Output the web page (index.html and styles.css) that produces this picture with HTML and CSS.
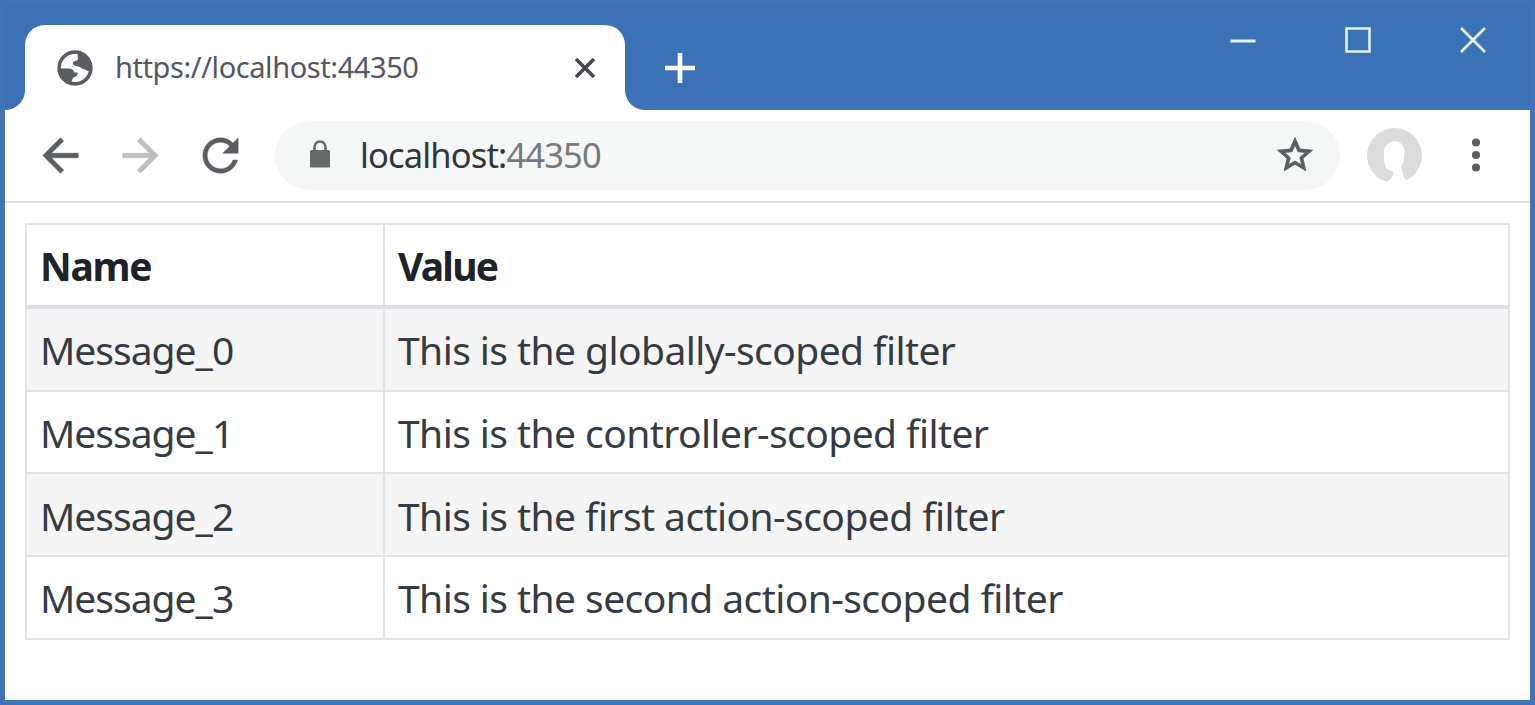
FILE: index.html
```html
<!DOCTYPE html>
<html lang="en">
<head>
<meta charset="utf-8">
<title>https://localhost:44350</title>
<link rel="stylesheet" href="styles.css">
</head>
<body>
<div class="window">
  <header class="titlebar">
    <div class="tab">
      <svg class="globe" viewBox="0 0 36 36"><circle cx="18" cy="18" r="15.900" fill="#fff" stroke="#5a5d61" stroke-width="3.600"/><path d="M21 3L28 6L34 15L33 21C30 22 29 19 25.500 19C24 16 20 17 16.500 15C14.500 12.500 17 11 20 10.500C22 9 20 7 21 3ZM2 18.500H11C15 18.500 17 20 17 22.500H20.500C21 25 19 27 16.500 27.500C15 29 15 31 14 33L7 29Z" fill="#5a5d61"/></svg>
      <span class="tab-title">https://localhost:44350</span>
      <svg class="tab-close" viewBox="0 0 22 22"><path d="M2 2L20 20M20 2L2 20" stroke="#45484c" stroke-width="3.600"/></svg>
    </div>
    <svg class="new-tab" viewBox="0 0 30 30"><path d="M15 0V30M0 15H30" stroke="#fff" stroke-width="4.600"/></svg>
    <div class="controls">
      <svg viewBox="0 0 28 28"><path d="M1.500 15H26.500" stroke="#e6f0fb" stroke-width="3"/></svg>
      <svg viewBox="0 0 28 28"><path d="M2.500 2.500H25.500V25.500H2.500Z" fill="none" stroke="#e6f0fb" stroke-width="2.600"/></svg>
      <svg viewBox="0 0 28 28"><path d="M2 2L26 26M26 2L2 26" stroke="#e6f0fb" stroke-width="2.800"/></svg>
    </div>
  </header>
  <nav class="toolbar">
    <svg class="nav-icon" viewBox="0 0 24 24"><path fill="#5a5d61" stroke="#5a5d61" stroke-width=".3" d="M20 11H7.830l5.590-5.590L12 4l-8 8 8 8 1.410-1.410L7.830 13H20v-2z"/></svg>
    <svg class="nav-icon" viewBox="0 0 24 24"><path fill="#bcbdbc" stroke="#bcbdbc" stroke-width=".3" d="M12 4l-1.410 1.410L16.170 11H4v2h12.170l-5.580 5.590L12 20l8-8z"/></svg>
    <svg class="nav-icon" viewBox="0 0 24 24"><path fill="#5a5d61" stroke="#5a5d61" stroke-width=".2" d="M17.650 6.350C16.200 4.900 14.210 4 12 4c-4.420 0-7.990 3.580-7.990 8s3.570 8 7.990 8c3.730 0 6.840-2.550 7.730-6h-2.080c-.82 2.330-3.040 4-5.650 4-3.310 0-6-2.690-6-6s2.690-6 6-6c1.660 0 3.140.69 4.220 1.780L13 11h7V4l-2.350 2.350z"/></svg>
    <div class="omnibox">
      <svg class="lock" viewBox="0 0 20 28"><rect y="10" width="20" height="17.500" rx="1.500" fill="#66686b"/><path d="M4.500 11V7a5.500 5.500 0 0 1 11 0v4" fill="none" stroke="#66686b" stroke-width="2.600"/></svg>
      <span class="url">localhost:<span class="port">44350</span></span>
      <svg class="star" viewBox="0 0 24 24"><path fill="#5a5d61" stroke="#5a5d61" stroke-width=".5" d="M22 9.240l-7.190-.62L12 2 9.190 8.630 2 9.240l5.460 4.730L5.820 21 12 17.270 18.180 21l-1.630-7.030L22 9.240zM12 15.400l-3.760 2.270 1-4.280-3.320-2.880 4.380-.38L12 6.100l1.710 4.040 4.380.38-3.320 2.880 1 4.280L12 15.400z"/></svg>
    </div>
    <svg class="avatar" viewBox="0 0 55 55"><path fill="#dadcdb" d="M18.500 53.500A27.500 27.500 0 1 1 40 52Q36 52 34.500 39Q38 31 37.500 23C37 10 17.500 10 17 24C16.500 37 18 43 26.500 43.500Q26 51 20 53.500Z"/></svg>
    <svg class="menu" viewBox="0 0 10 36"><g fill="#5a5d61"><circle cx="5" cy="5.500" r="4.100"/><circle cx="5" cy="18" r="4.100"/><circle cx="5" cy="30.500" r="4.100"/></g></svg>
  </nav>
  <main class="page">
    <div class="table">
      <div class="row head"><div class="cell">Name</div><div class="cell">Value</div></div>
      <div class="row odd"><div class="cell">Message_0</div><div class="cell">This is the globally-scoped filter</div></div>
      <div class="row"><div class="cell">Message_1</div><div class="cell">This is the controller-scoped filter</div></div>
      <div class="row odd"><div class="cell">Message_2</div><div class="cell">This is the first action-scoped filter</div></div>
      <div class="row"><div class="cell">Message_3</div><div class="cell">This is the second action-scoped filter</div></div>
    </div>
  </main>
</div>
</body>
</html>
```
FILE: styles.css
```css
* { box-sizing: border-box; }
body { margin: 0; font-family: "Noto Sans", "Open Sans", sans-serif; }
svg { display: block; flex: none; }
.window { width: 1535px; height: 705px; background: #fff; border: 5px solid #4173b7; display: flex; flex-direction: column; overflow: hidden; }
.titlebar { height: 105px; flex: none; background: #3a72b5; display: flex; align-items: flex-start; padding-left: 20px; }
.tab { position: relative; width: 600px; height: 85px; margin-top: 20px; background: #fff; border-radius: 20px 20px 0 0; display: flex; align-items: center; padding: 0 29px 0 32px; }
.tab::before, .tab::after { content: ""; position: absolute; bottom: 0; width: 20px; height: 20px; }
.tab::before { left: -20px; background: radial-gradient(circle at 0 0, transparent 19.5px, #fff 20.5px); }
.tab::after { right: -20px; background: radial-gradient(circle at 100% 0, transparent 19.5px, #fff 20.5px); }
.globe { width: 36px; height: 36px; }
.tab-title { margin-left: 22px; padding-bottom: 2px; font-size: 29px; line-height: 40px; letter-spacing: -0.42px; color: #55565f; white-space: nowrap; }
.tab-close { width: 22px; height: 22px; margin-left: auto; }
.new-tab { width: 30px; height: 30px; margin: 48px 0 0 40px; }
.controls { display: flex; gap: 87px; margin: 21px 43.5px 0 auto; }
.controls svg { width: 28px; height: 28px; }
.toolbar { height: 92.500px; flex: none; border-bottom: 2px solid #e0e1e8; display: flex; align-items: center; padding-left: 28.500px; }
.nav-icon { width: 53px; height: 53px; margin-right: 27.300px; }
.omnibox { width: 1065px; height: 69px; margin-left: 0.500px; border-radius: 35px; background: #f5f6f6; display: flex; align-items: center; padding: 0 24px 0 35px; }
.lock { width: 20px; height: 28px; margin-bottom: 2px; }
.url { margin-left: 30px; font-size: 34.500px; line-height: 48px; letter-spacing: -0.85px; color: #33363b; white-space: nowrap; }
.port { color: #77797d; }
.star { width: 42px; height: 42px; margin-left: auto; }
.avatar { width: 55px; height: 55px; margin-left: 27px; }
.menu { width: 10px; height: 36px; margin-left: 49px; }
.page { flex: 1; padding: 20.500px 20px 0; }
.table { width: 1485px; border: 2px solid #e2e3e6; border-bottom: 0; }
.row { display: grid; grid-template-columns: 356px 1fr; height: 82.700px; border-bottom: 2px solid #e1e2e6; }
.head { border-bottom: 4px solid #dddfe6; font-weight: 700; height: 84px; }
.odd { background: #f5f5f5; }
.cell { display: flex; align-items: center; padding: 2px 0 0 13px; font-size: 39px; line-height: 54px; color: #363b42; white-space: nowrap; letter-spacing: -1px; }
.cell + .cell { border-left: 2px solid #e2e3e6; letter-spacing: -0.57px; }
.head .cell { color: #20222a; letter-spacing: -1.300px; }
.head .cell + .cell { letter-spacing: -1.800px; }
```
